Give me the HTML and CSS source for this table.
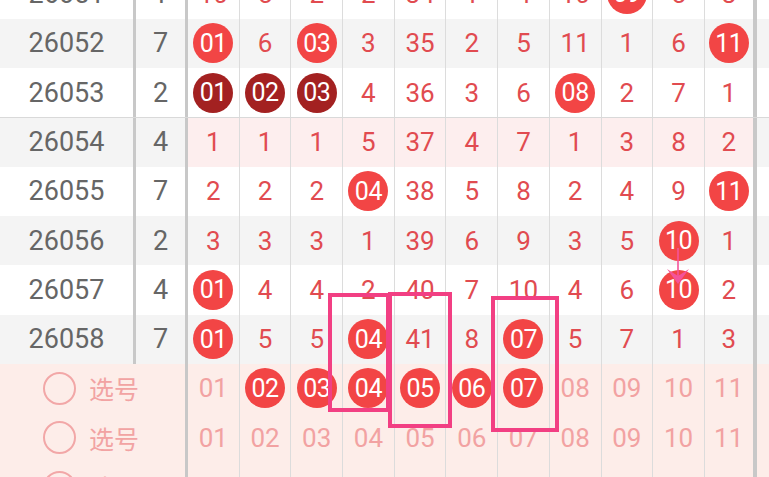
FILE: index.html
```html
<!DOCTYPE html>
<html>

<head>
    <title>走势图</title>
    <link rel="stylesheet" href="styles.css">
</head>

<body>
    <div class="chart">
        <div class="row">
            <div class="period">26051</div>
            <div class="count">1</div>
            <div class="c">10</div><div class="c">5</div><div class="c">2</div><div class="c">2</div><div class="c">34</div><div class="c">1</div><div class="c">4</div><div class="c">10</div><div class="c"><span class="ball">09</span></div><div class="c">5</div><div class="c end">8</div>
            <div class="tail"></div>
        </div>
        <div class="row gray">
            <div class="period">26052</div>
            <div class="count">7</div>
            <div class="c"><span class="ball">01</span></div><div class="c">6</div><div class="c"><span class="ball">03</span></div><div class="c">3</div><div class="c">35</div><div class="c">2</div><div class="c">5</div><div class="c">11</div><div class="c">1</div><div class="c">6</div><div class="c end"><span class="ball">11</span></div>
            <div class="tail"></div>
        </div>
        <div class="row">
            <div class="period">26053</div>
            <div class="count">2</div>
            <div class="c"><span class="ball dark">01</span></div><div class="c"><span class="ball dark">02</span></div><div class="c"><span class="ball dark">03</span></div><div class="c">4</div><div class="c">36</div><div class="c">3</div><div class="c">6</div><div class="c"><span class="ball">08</span></div><div class="c">2</div><div class="c">7</div><div class="c end">1</div>
            <div class="tail"></div>
        </div>
        <div class="row gray hot split">
            <div class="period">26054</div>
            <div class="count">4</div>
            <div class="c">1</div><div class="c">1</div><div class="c">1</div><div class="c">5</div><div class="c">37</div><div class="c">4</div><div class="c">7</div><div class="c">1</div><div class="c">3</div><div class="c">8</div><div class="c end">2</div>
            <div class="tail"></div>
        </div>
        <div class="row">
            <div class="period">26055</div>
            <div class="count">7</div>
            <div class="c">2</div><div class="c">2</div><div class="c">2</div><div class="c"><span class="ball">04</span></div><div class="c">38</div><div class="c">5</div><div class="c">8</div><div class="c">2</div><div class="c">4</div><div class="c">9</div><div class="c end"><span class="ball">11</span></div>
            <div class="tail"></div>
        </div>
        <div class="row gray">
            <div class="period">26056</div>
            <div class="count">2</div>
            <div class="c">3</div><div class="c">3</div><div class="c">3</div><div class="c">1</div><div class="c">39</div><div class="c">6</div><div class="c">9</div><div class="c">3</div><div class="c">5</div><div class="c"><span class="ball">10</span></div><div class="c end">1</div>
            <div class="tail"></div>
        </div>
        <div class="row">
            <div class="period">26057</div>
            <div class="count">4</div>
            <div class="c"><span class="ball">01</span></div><div class="c">4</div><div class="c">4</div><div class="c">2</div><div class="c">40</div><div class="c">7</div><div class="c">10</div><div class="c">4</div><div class="c">6</div><div class="c"><span class="ball">10</span></div><div class="c end">2</div>
            <div class="tail"></div>
        </div>
        <div class="row gray">
            <div class="period">26058</div>
            <div class="count">7</div>
            <div class="c"><span class="ball">01</span></div><div class="c">5</div><div class="c">5</div><div class="c"><span class="ball">04</span></div><div class="c">41</div><div class="c">8</div><div class="c"><span class="ball">07</span></div><div class="c">5</div><div class="c">7</div><div class="c">1</div><div class="c end">3</div>
            <div class="tail"></div>
        </div>

        <div class="row pick">
            <div class="label"><span class="ring"></span>选号</div>
            <div class="c">01</div><div class="c"><span class="ball">02</span></div><div class="c"><span class="ball">03</span></div><div class="c"><span class="ball">04</span></div><div class="c"><span class="ball">05</span></div><div class="c"><span class="ball">06</span></div><div class="c"><span class="ball">07</span></div><div class="c">08</div><div class="c">09</div><div class="c">10</div><div class="c end">11</div>
            <div class="tail"></div>
        </div>
        <div class="row pick">
            <div class="label"><span class="ring"></span>选号</div>
            <div class="c">01</div><div class="c">02</div><div class="c">03</div><div class="c">04</div><div class="c">05</div><div class="c">06</div><div class="c">07</div><div class="c">08</div><div class="c">09</div><div class="c">10</div><div class="c end">11</div>
            <div class="tail"></div>
        </div>
        <div class="row pick">
            <div class="label"><span class="ring"></span>选号</div>
            <div class="c">01</div><div class="c">02</div><div class="c">03</div><div class="c">04</div><div class="c">05</div><div class="c">06</div><div class="c">07</div><div class="c">08</div><div class="c">09</div><div class="c">10</div><div class="c end">11</div>
            <div class="tail"></div>
        </div>
    </div>

    <!-- trend arrow 10 -> 10 -->
    <svg class="trend" width="769" height="477" viewBox="0 0 769 477">
        <line x1="678" y1="248" x2="678" y2="281" stroke="#f4539a" stroke-width="1.6" />
        <path d="M667 269 L678 284 L689 269 L678 276 Z" fill="#f4539a" />
    </svg>

    <!-- selection boxes -->
    <div class="mark mark-a"></div>
    <div class="mark mark-b"></div>
    <div class="mark mark-c"></div>
</body>

</html>
```

FILE: styles.css
```css
body {
    margin: 0;
    width: 769px;
    height: 477px;
    overflow: hidden;
    position: relative;
    background-color: #fff;
    font-family: Roboto, "Noto Sans CJK SC", sans-serif;
}

.chart {
    margin-top: -30.8px;
    width: 830px;
}

.row {
    display: flex;
    height: 49.33px;
    box-sizing: border-box;
}

.row.gray {
    background-color: #f4f4f4;
}

.row.hot .c {
    background-color: #fdeeee;
}

.row.split {
    border-top: 1px solid #d9d9d9;
}

.period {
    flex: none;
    width: 136px;
    box-sizing: border-box;
    border-right: 3.5px solid #c8c8c8;
    display: flex;
    align-items: center;
    justify-content: center;
    font-size: 27px;
    color: #666;
}

.count {
    flex: none;
    width: 52px;
    box-sizing: border-box;
    border-right: 3.5px solid #c8c8c8;
    display: flex;
    align-items: center;
    justify-content: center;
    font-size: 27px;
    color: #666;
}

.c {
    flex: none;
    width: 51.7px;
    box-sizing: border-box;
    border-right: 1px solid #dcdcdc;
    display: flex;
    align-items: center;
    justify-content: center;
    font-size: 26px;
    color: #e14b50;
}

.c.end {
    border-right: 4px solid #c8c8c8;
}

.tail {
    flex: 1;
}

.ball {
    width: 40px;
    height: 40px;
    border-radius: 50%;
    background-color: #f24545;
    color: #fff;
    display: flex;
    align-items: center;
    justify-content: center;
    font-size: 25px;
    letter-spacing: -0.5px;
}

.ball.dark {
    background-color: #a32121;
}

/* selection rows */
.row.pick {
    background-color: #fdede9;
}

.pick .label {
    flex: none;
    width: 188px;
    box-sizing: border-box;
    border-right: 3.5px solid #c8c8c8;
    display: flex;
    align-items: center;
    gap: 13px;
    padding-left: 43px;
    font-size: 25px;
    color: #f2a3a3;
}

.ring {
    width: 33px;
    height: 33px;
    box-sizing: border-box;
    border: 2px solid #f2a7a7;
    border-radius: 50%;
}

.pick .c {
    color: #f2a2a2;
}

.trend {
    position: absolute;
    left: 0;
    top: 0;
    pointer-events: none;
}

.mark {
    position: absolute;
    box-sizing: border-box;
    border: 4px solid #f23f83;
}

.mark-a {
    left: 328px;
    top: 293px;
    width: 62px;
    height: 119px;
}

.mark-b {
    left: 388px;
    top: 292px;
    width: 64px;
    height: 136px;
}

.mark-c {
    left: 491px;
    top: 296px;
    width: 68px;
    height: 136px;
}
```
